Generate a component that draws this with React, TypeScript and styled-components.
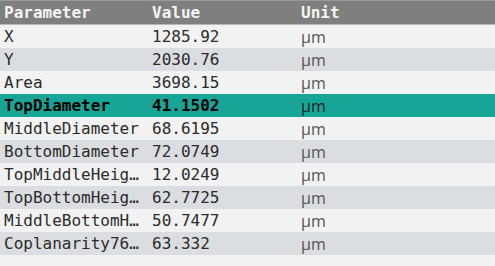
import styled, { createGlobalStyle } from "styled-components"

const GlobalStyle = createGlobalStyle`
  html, body {
    margin: 0;
    padding: 0;
    background: #f2f2f2;
  }
`

const rows = [
  { name: "X", value: "1285.92" },
  { name: "Y", value: "2030.76" },
  { name: "Area", value: "3698.15" },
  { name: "TopDiameter", value: "41.1502", selected: true },
  { name: "MiddleDiameter", value: "68.6195" },
  { name: "BottomDiameter", value: "72.0749" },
  { name: "TopMiddleHeight", value: "12.0249" },
  { name: "TopBottomHeight", value: "62.7725" },
  { name: "MiddleBottomHeight", value: "50.7477" },
  { name: "Coplanarity7654", value: "63.332" },
]

const Table = styled.div`
  width: 495px;
  height: 266px;
  background: #f2f2f2;
  overflow: hidden;
  font-family: "DejaVu Sans Mono", "Liberation Mono", monospace;
  font-size: 16px;
`

const Row = styled.div<{ $bg: string; $head?: boolean }>`
  display: grid;
  grid-template-columns: 148px 149px 1fr;
  align-items: center;
  height: ${(p) => (p.$head ? "23px" : "23px")};
  background: ${(p) => p.$bg};
  color: ${(p) => (p.$head ? "#f4f4f4" : "#2b2b2b")};
  font-weight: ${(p) => (p.$head ? 700 : 400)};
  border-top: ${(p) => (p.$head ? "1px solid #9a9a9a" : "none")};
  border-bottom: ${(p) => (p.$head ? "1px solid #b8b8b8" : "none")};
  box-sizing: content-box;
`

const Cell = styled.div<{ $bold?: boolean }>`
  padding-left: 4px;
  white-space: nowrap;
  overflow: hidden;
  text-overflow: ellipsis;
  font-weight: ${(p) => (p.$bold ? 700 : "inherit")};
  color: ${(p) => (p.$bold ? "#000" : "inherit")};
`

const Unit = styled(Cell)`
  font-family: "Open Sans", "Noto Sans", sans-serif;
  font-size: 16px;
  font-weight: 400;
  color: ${(p) => (p.$bold ? "#222" : "#555")};
`

export default function App() {
  return (
    <>
      <GlobalStyle />
      <Table>
        <Row $bg="#7f7f7f" $head>
          <Cell>Parameter</Cell>
          <Cell>Value</Cell>
          <Cell>Unit</Cell>
        </Row>
        {rows.map((r, i) => (
          <Row
            key={r.name}
            $bg={r.selected ? "#17a597" : i % 2 === 0 ? "#f2f2f2" : "#dcdde0"}
          >
            <Cell $bold={r.selected}>{r.name}</Cell>
            <Cell $bold={r.selected}>{r.value}</Cell>
            <Unit $bold={r.selected}>µm</Unit>
          </Row>
        ))}
      </Table>
    </>
  )
}
